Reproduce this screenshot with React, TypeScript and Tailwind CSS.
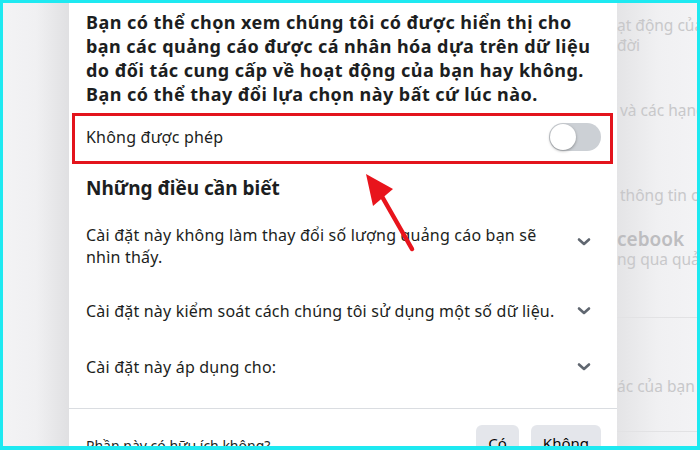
import React from "react";

const font = { fontFamily: '"Noto Sans", "Open Sans", sans-serif' };

function Chevron() {
  return (
    <svg width="14" height="10" viewBox="0 0 14 10" className="shrink-0 block">
      <path d="M2 2.5 L7 7 L12 2.5" fill="none" stroke="#606770" strokeWidth="2.6" strokeLinecap="round" strokeLinejoin="round" />
    </svg>
  );
}

export default function App() {
  return (
    <div className="relative w-[700px] h-[450px] bg-[#1ee9f1] pt-[3px] px-[3px] pb-[4px] overflow-hidden" style={font}>
      <div className="flex h-full w-full overflow-hidden">
        {/* left dim page */}
        <div className="w-[66px] shrink-0 h-full bg-gradient-to-r from-[#f3f3f5] via-[#f0f0f2] to-[#e0e0e2]" />

        {/* modal */}
        <div className="w-[548px] shrink-0 h-full overflow-hidden bg-white pt-[7px] text-[#1c1e21]">
          <p className="px-[17px] text-[18px] font-bold leading-[24px] tracking-[0.45px]">
            Bạn có thể chọn xem chúng tôi có được hiển thị cho
            <br />
            bạn các quảng cáo được cá nhân hóa dựa trên dữ liệu
            <br />
            do đối tác cung cấp về hoạt động của bạn hay không.
            <br />
            Bạn có thể thay đổi lựa chọn này bất cứ lúc nào.
          </p>

          <div className="mt-[9px] h-[44px] flex items-center justify-between pl-[17px] pr-[16px]">
            <span className="text-[16px] tracking-[0.2px]">Không được phép</span>
            <div className="w-[52px] h-[28px] rounded-full bg-[#ccd0d5] p-[1px] flex items-center">
              <div className="w-[26px] h-[26px] rounded-full bg-white shadow-[0_1px_3px_rgba(0,0,0,0.35)]" />
            </div>
          </div>

          <h2 className="mt-[17px] px-[17px] text-[19px] font-bold leading-[24px]">Những điều cần biết</h2>

          <div className="mt-[24px] flex items-start justify-between pl-[17px] pr-[26px] text-[16px] leading-[22px] tracking-[0.2px]">
            <span>
              Cài đặt này không làm thay đổi số lượng quảng cáo bạn sẽ
              <br />
              nhìn thấy.
            </span>
            <span className="mt-[13px]">
              <Chevron />
            </span>
          </div>

          <div className="mt-[32px] flex items-center justify-between pl-[17px] pr-[26px] text-[16px] leading-[22px] tracking-[0.2px]">
            <span>Cài đặt này kiểm soát cách chúng tôi sử dụng một số dữ liệu.</span>
            <Chevron />
          </div>

          <div className="mt-[34px] flex items-center justify-between pl-[17px] pr-[26px] text-[16px] leading-[22px] tracking-[0.2px]">
            <span>Cài đặt này áp dụng cho:</span>
            <Chevron />
          </div>

          <div className="mt-[30px] border-t border-[#dadde1]" />

          <div className="mt-[16px] flex items-center justify-between pl-[17px] pr-[16px]">
            <span className="text-[14px] mt-[4px]">Phần này có hữu ích không?</span>
            <div className="flex gap-[12px]">
              <button className="h-[36px] px-[12px] rounded-[6px] bg-[#e4e6eb] text-[15px] text-[#050505]">Có</button>
              <button className="h-[36px] px-[12px] rounded-[6px] bg-[#e4e6eb] text-[15px] text-[#050505]">Không</button>
            </div>
          </div>
        </div>

        {/* right dim page */}
        <div className="flex-1 h-full overflow-hidden bg-gradient-to-r from-[#e4e4e6] via-[#f0f0f2] to-[#f3f3f5] whitespace-nowrap text-[15.5px] text-[#c8c8ca] leading-[20px]">
          <div className="mt-[12px]">ạt động của</div>
          <div>đời</div>
          <div className="mt-[45px] pl-[3px]">và các hạng</div>
          <div className="mt-[65px] pl-[3px]">thông tin củ</div>
          <div className="mt-[23px] text-[19px] leading-[22px] font-semibold text-[#bdbdc0]">cebook</div>
          <div className="mt-[0px] leading-[18px]">ng qua quản</div>
          <div className="mt-[49px] border-t border-[#e2e2e4]" />
          <div className="mt-[58px]">ác của bạn t</div>
          <div className="mt-[35px] border-t border-[#e2e2e4]" />
        </div>
      </div>

      {/* annotation box */}
      <div className="absolute left-[72px] top-[113px] w-[541px] h-[51px] border-[3px] border-[#e3141c]" />

      {/* annotation arrow */}
      <svg className="absolute left-0 top-0" width="700" height="450" viewBox="0 0 700 450">
        <line x1="412" y1="249" x2="380" y2="193" stroke="#e8141c" strokeWidth="4.5" strokeLinecap="round" />
        <polygon points="366,174 393,189 373,206" fill="#e8141c" />
      </svg>
    </div>
  );
}
